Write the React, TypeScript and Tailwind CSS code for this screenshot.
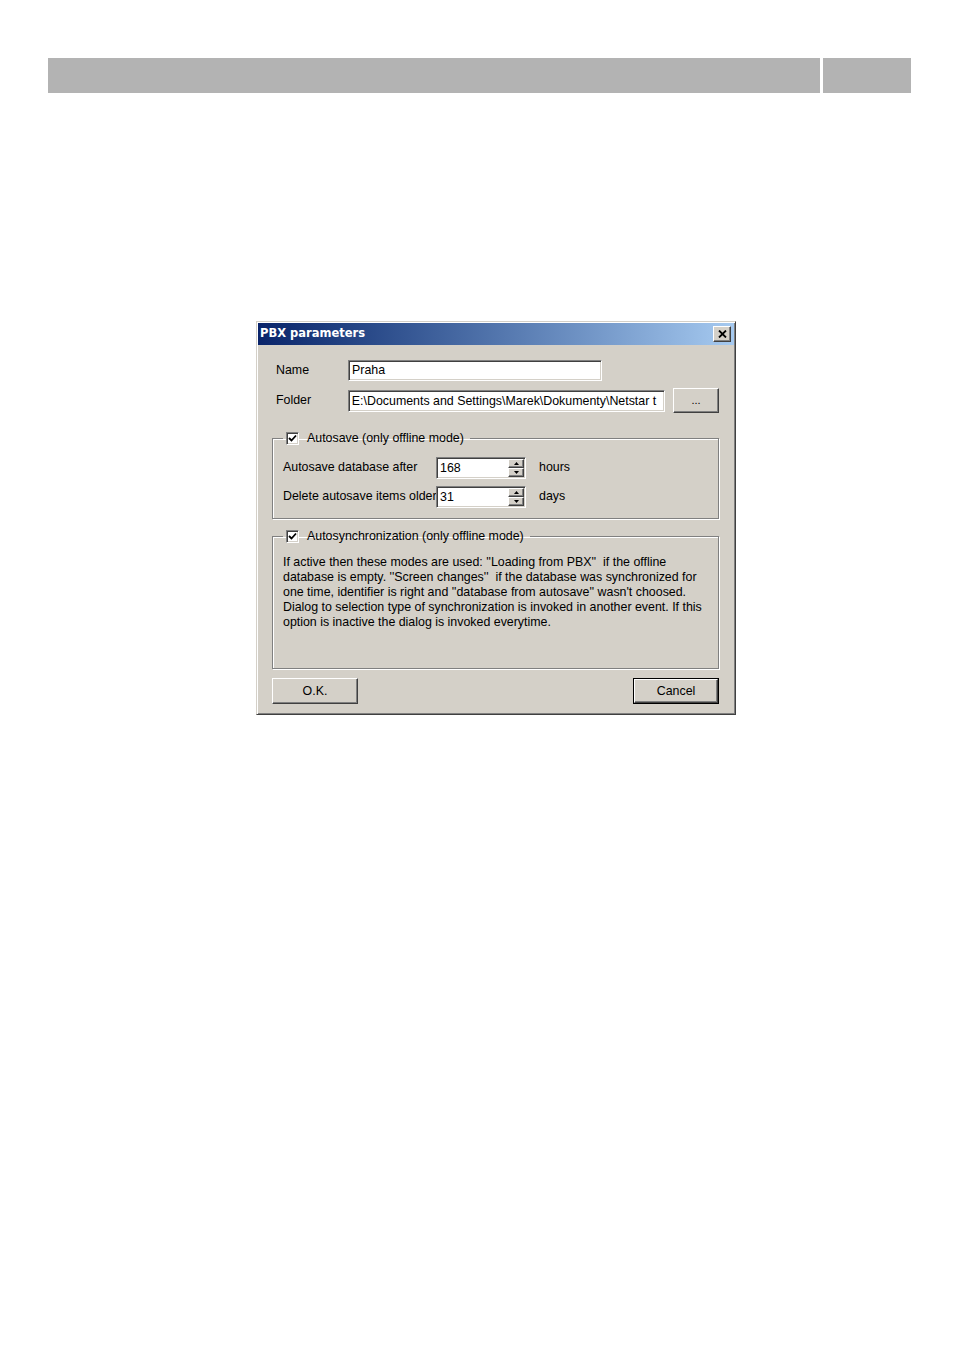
const sunken =
  "border border-t-[#808080] border-l-[#808080] border-b-white border-r-white shadow-[inset_1px_1px_0_#404040,inset_-1px_-1px_0_#d4d0c8] bg-white";
const raised =
  "border border-t-white border-l-white border-b-[#404040] border-r-[#404040] shadow-[inset_-1px_-1px_0_#808080] bg-[#d4d0c8]";
const etched =
  "border border-[#808080] shadow-[inset_1px_1px_0_#fff,1px_1px_0_#fff]";

const Check = () => (
  <span className={`${sunken} inline-flex h-[13px] w-[13px] items-center justify-center`}>
    <svg width="9" height="9" viewBox="0 0 9 9">
      <path d="M1 4 L3.5 6.5 L8 1.5" fill="none" stroke="#000" strokeWidth="1.8" />
    </svg>
  </span>
);

const Spinner = ({ value }: { value: string }) => (
  <div className={`${sunken} flex h-[22px] w-[90px] items-stretch`}>
    <span className="flex-1 pl-[3px] pt-[3px] leading-[15px]">{value}</span>
    <div className="flex w-[17px] flex-col py-[1px] pr-[1px]">
      <div className={`${raised} flex flex-1 items-center justify-center`}>
        <svg width="5" height="3" viewBox="0 0 5 3">
          <path d="M2.5 0 L5 3 L0 3 Z" fill="#000" />
        </svg>
      </div>
      <div className={`${raised} flex flex-1 items-center justify-center`}>
        <svg width="5" height="3" viewBox="0 0 5 3">
          <path d="M0 0 L5 0 L2.5 3 Z" fill="#000" />
        </svg>
      </div>
    </div>
  </div>
);

const App = () => {
  return (
    <div className="min-h-[1349px] w-[954px] bg-white font-['Liberation_Sans',Arial,sans-serif] text-[12.4px] text-black">
      {/* header bars */}
      <div className="flex gap-[3px] pl-[48px] pt-[58px]">
        <div className="h-[35px] w-[772px] bg-[#b3b3b3]" />
        <div className="h-[35px] w-[88px] bg-[#b3b3b3]" />
      </div>

      {/* dialog */}
      <div className="ml-[256px] mt-[228px] w-[480px] border border-t-[#d4d0c8] border-l-[#d4d0c8] border-b-[#404040] border-r-[#404040] bg-[#d4d0c8] p-[1px] shadow-[inset_1px_1px_0_#fff,inset_-1px_-1px_0_#808080]">
        <div className="flex h-[22px] items-center justify-between bg-gradient-to-r from-[#0a246a] to-[#a6caf0] pl-[2px] pr-[3px]">
          <span className="font-['DejaVu_Sans',sans-serif] text-[11.5px] font-bold text-white">PBX parameters</span>
          <div className={`${raised} flex h-[16px] w-[18px] items-center justify-center`}>
            <svg width="9" height="8" viewBox="0 0 9 8">
              <path d="M1 0.5 L8 7.5 M8 0.5 L1 7.5" stroke="#000" strokeWidth="1.8" />
            </svg>
          </div>
        </div>

        <div className="pl-[14px] pr-[15px]">
          <div className="mt-[15px] flex items-center">
            <span className="w-[76px] pl-[4px]">Name</span>
            <div className={`${sunken} h-[21px] w-[254px] pl-[3px] pt-[2px] leading-[15px]`}>Praha</div>
          </div>

          <div className="mt-[7px] flex items-center">
            <span className="w-[76px] pl-[4px]">Folder</span>
            <div className={`${sunken} h-[22px] w-[318px] overflow-hidden whitespace-nowrap pl-[3px] pt-[3px] leading-[15px]`}>
              E:\Documents and Settings\Marek\Dokumenty\Netstar t
            </div>
            <button className={`${raised} ml-[8px] h-[25px] w-[46px] text-[11px] leading-none`}>...</button>
          </div>

          <fieldset className={`${etched} mt-[16px] h-[90px] pl-[10px]`}>
            <legend className="flex items-center gap-[8px] pl-[3px] pr-[6px]">
              <Check />
              <span>Autosave (only offline mode)</span>
            </legend>
            <div className="mt-[9px] flex items-center">
              <span className="w-[153px] whitespace-nowrap">Autosave database after</span>
              <Spinner value="168" />
              <span className="ml-[13px]">hours</span>
            </div>
            <div className="mt-[7px] flex items-center">
              <span className="w-[153px] whitespace-nowrap">Delete autosave items older</span>
              <Spinner value="31" />
              <span className="ml-[13px]">days</span>
            </div>
          </fieldset>

          <fieldset className={`${etched} mt-[8px] h-[142px] pl-[10px] pr-[6px]`}>
            <legend className="flex items-center gap-[8px] pl-[3px] pr-[6px]">
              <Check />
              <span>Autosynchronization (only offline mode)</span>
            </legend>
            <p className="mt-[9px] whitespace-nowrap leading-[15px]">
              If active then these modes are used: ''Loading from PBX''&nbsp; if the offline
              <br />
              database is empty. ''Screen changes''&nbsp; if the database was synchronized for
              <br />
              one time, identifier is right and ''database from autosave'' wasn't choosed.
              <br />
              Dialog to selection type of synchronization is invoked in another event. If this
              <br />
              option is inactive the dialog is invoked everytime.
            </p>
          </fieldset>

          <div className="mt-[9px] flex justify-between pb-[9px]">
            <button className={`${raised} h-[26px] w-[86px]`}>O.K.</button>
            <button className="h-[26px] w-[86px] border border-black bg-[#d4d0c8] p-0">
              <div className={`${raised} flex h-full w-full items-center justify-center`}>Cancel</div>
            </button>
          </div>
        </div>
      </div>
    </div>
  );
};

export default App;
